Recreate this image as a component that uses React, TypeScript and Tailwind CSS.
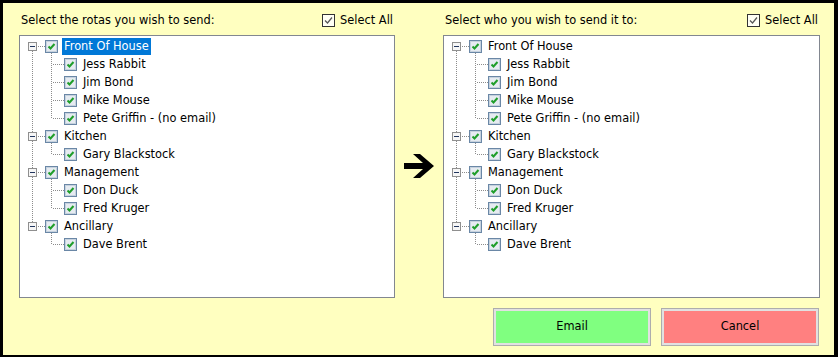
import React from "react";

type Group = { name: string; children: string[] };

const groups: Group[] = [
  {
    name: "Front Of House",
    children: ["Jess Rabbit", "Jim Bond", "Mike Mouse", "Pete Griffin - (no email)"],
  },
  { name: "Kitchen", children: ["Gary Blackstock"] },
  { name: "Management", children: ["Don Duck", "Fred Kruger"] },
  { name: "Ancillary", children: ["Dave Brent"] },
];

const DOT = "#8c8c8c";

function Check({ x, y }: { x: number; y: number }) {
  return (
    <g transform={`translate(${x} ${y})`}>
      <rect x="0.5" y="0.5" width="12" height="12" fill="#dde4ec" stroke="#6a87a6" />
      <rect x="1.5" y="1.5" width="10" height="10" fill="#e6ebf1" stroke="#c6d2de" />
      <path d="M3.5 6.5 L5.5 8.5 L9.5 4" fill="none" stroke="#1f9e2a" strokeWidth="2" />
    </g>
  );
}

function VLine({ x, y1, y2 }: { x: number; y1: number; y2: number }) {
  return (
    <line
      x1={x + 0.5}
      x2={x + 0.5}
      y1={y1}
      y2={y2}
      stroke={DOT}
      strokeDasharray="1 1"
      shapeRendering="crispEdges"
    />
  );
}

function HLine({ x1, x2, y }: { x1: number; x2: number; y: number }) {
  return (
    <line
      x1={x1}
      x2={x2}
      y1={y + 0.5}
      y2={y + 0.5}
      stroke={DOT}
      strokeDasharray="1 1"
      shapeRendering="crispEdges"
    />
  );
}

function ParentGutter({ first, last }: { first: boolean; last: boolean }) {
  return (
    <svg width="44" height="18" className="shrink-0">
      {!first && <VLine x={12} y1={0} y2={5} />}
      {!last && <VLine x={12} y1={14} y2={18} />}
      <rect x="8.5" y="5.5" width="8" height="8" fill="#f6f6f6" stroke="#8f8f8f" shapeRendering="crispEdges" />
      <line x1="10" x2="15" y1="9.5" y2="9.5" stroke="#22365e" shapeRendering="crispEdges" />
      <HLine x1={18} x2={25} y={9} />
      <Check x={25} y={3} />
      <VLine x={31} y1={16} y2={18} />
    </svg>
  );
}

function ChildGutter({ groupLast, last }: { groupLast: boolean; last: boolean }) {
  return (
    <svg width="63" height="18" className="shrink-0">
      {!groupLast && <VLine x={12} y1={0} y2={18} />}
      <VLine x={31} y1={0} y2={last ? 10 : 18} />
      <HLine x1={33} x2={44} y={9} />
      <Check x={44} y={3} />
    </svg>
  );
}

function Tree({ selected }: { selected?: boolean }) {
  return (
    <div className="flex-1 border border-[#828790] bg-white pt-[1px]">
      {groups.map((g, gi) => (
        <div key={g.name}>
          <div className="flex h-[18px] items-center">
            <ParentGutter first={gi === 0} last={gi === groups.length - 1} />
            <span
              className={
                gi === 0 && selected
                  ? "-ml-[2px] mt-[1px] bg-[#0078d7] px-[2px] leading-[17px] text-white"
                  : "mt-[1px] leading-[17px]"
              }
            >
              {g.name}
            </span>
          </div>
          {g.children.map((c, ci) => (
            <div key={c} className="flex h-[18px] items-center">
              <ChildGutter groupLast={gi === groups.length - 1} last={ci === g.children.length - 1} />
              <span className="mt-[1px] leading-[17px]">{c}</span>
            </div>
          ))}
        </div>
      ))}
    </div>
  );
}

function SelectAll() {
  return (
    <div className="flex items-center gap-[5px]">
      <svg width="13" height="13" className="shrink-0">
        <rect x="0.5" y="0.5" width="12" height="12" fill="#fffff4" stroke="#333" shapeRendering="crispEdges" />
        <path d="M3 6.5 L5.5 9 L10 3.5" fill="none" stroke="#555" strokeWidth="1.2" />
      </svg>
      <span>Select All</span>
    </div>
  );
}

function Panel({ label, selected, width }: { label: string; selected?: boolean; width: string }) {
  return (
    <div className={`flex flex-col ${width}`}>
      <div className="flex h-[32px] items-center justify-between px-[2px] pt-[4px]">
        <span>{label}</span>
        <SelectAll />
      </div>
      <Tree selected={selected} />
    </div>
  );
}

export default function App() {
  return (
    <div className="h-[357px] w-[838px] border-t-[3px] border-r-[4px] border-b-[2px] border-l-[3px] border-black bg-[#ffffc0] font-['DejaVu_Sans',sans-serif] text-[11.4px] text-black">
      <div className="flex h-[295px] pl-4">
        <Panel label="Select the rotas you wish to send:" selected width="w-[376px]" />
        <div className="flex w-[48px] items-center justify-center pt-[30px]">
          <svg width="30" height="24" viewBox="0 0 30 24">
            <polygon points="9,0 16,0 30,12 16,24 9,24 19,15 0,15 0,9 19,9" fill="#000" />
          </svg>
        </div>
        <Panel label="Select who you wish to send it to:" width="w-[377px]" />
      </div>
      <div className="flex justify-end gap-[10px] pt-[10px] pr-[15px]">
        <button className="h-[38px] w-[158px] border border-[#adadad] bg-[#e1e1e1] p-[2px]">
          <div className="flex h-full items-center justify-center bg-[#80ff80]">Email</div>
        </button>
        <button className="h-[38px] w-[158px] border border-[#adadad] bg-[#e1e1e1] p-[2px]">
          <div className="flex h-full items-center justify-center bg-[#ff8080]">Cancel</div>
        </button>
      </div>
    </div>
  );
}
